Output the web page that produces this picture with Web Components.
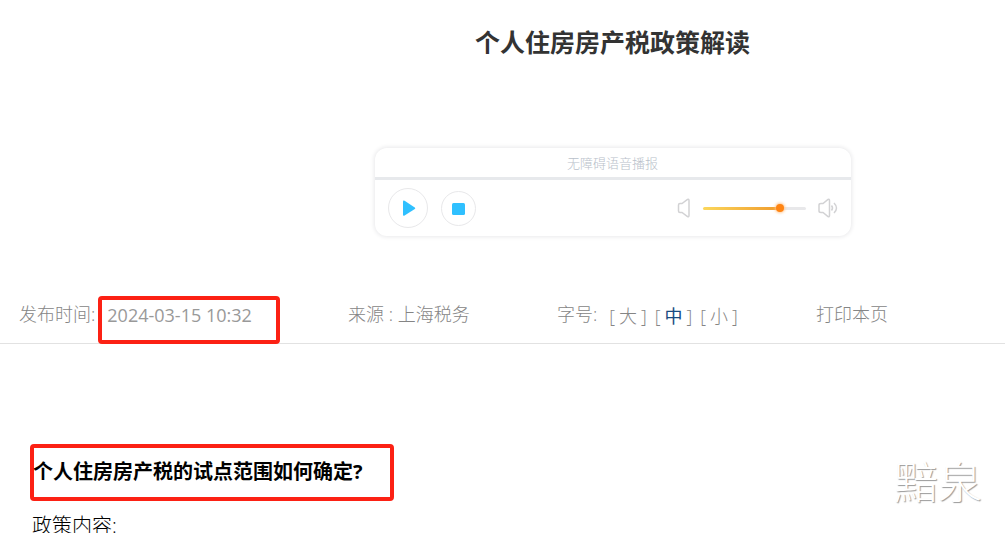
<!DOCTYPE html>
<html lang="zh-CN">
<head>
<meta charset="utf-8">
<title>个人住房房产税政策解读</title>
<style>
html{height:100%;overflow:hidden}
body{margin:0;min-height:100%;background:#fff;font-family:"Open Sans","Noto Sans CJK SC",sans-serif;color:#000}
</style>
</head>
<body>
<policy-page></policy-page>
<script>
const define=(name,html,setup)=>customElements.define(name,class extends HTMLElement{
  constructor(){
    super();
    const t=document.createElement('template');
    t.innerHTML=html;
    this.attachShadow({mode:'open'}).append(t.content.cloneNode(true));
    if(setup)setup(this.shadowRoot);
  }
});

define('mark-box',`
<style>
:host{display:block;box-sizing:border-box;border:4px solid #fc2114;border-radius:4px}
</style><slot></slot>`);

define('voice-player',`
<style>
:host{display:block;box-sizing:border-box;width:476px;max-width:100%;border-radius:12px;background:#fff;box-shadow:0 0 4px 1px #e9e9eb}
.head{height:29px;line-height:29px;text-align:center;font-size:13px;font-weight:300;color:#b9bfca;border-bottom:3px solid #e7e9ec;font-family:"Noto Sans CJK SC",sans-serif}
.bar{display:flex;align-items:center;height:56px;padding:0 13px}
button{display:flex;align-items:center;justify-content:center;box-sizing:border-box;border:1px solid #e8e8ea;border-radius:50%;background:#fff;padding:0}
.play{width:40px;height:40px}
.stop{width:35px;height:35px;margin-left:13px}
svg{display:block;flex:none}
.vol{display:flex;align-items:center;margin-left:auto;gap:12px}
input{appearance:none;-webkit-appearance:none;width:103px;height:14px;margin:0;background:transparent}
input::-webkit-slider-runnable-track{height:3px;border-radius:2px;background:linear-gradient(90deg,#fbd75c,#ef9a2c 76%,#e8e8ea 76%)}
input::-webkit-slider-thumb{-webkit-appearance:none;width:8px;height:8px;margin-top:-3px;border-radius:50%;background:#ff8412;box-shadow:0 0 3px 1px #ffc58d}
</style>
<div class="head">无障碍语音播报</div>
<div class="bar">
<button class="play" aria-label="播放"><svg width="20" height="20" viewBox="0 0 20 20"><path d="M5 3.500Q5 1.800 6.600 2.800L16.800 9.500Q17.800 10.300 16.800 11L6.600 17.500Q5 18.300 5 16.800Z" fill="#2fc0ff"/></svg></button>
<button class="stop" aria-label="停止"><svg width="13" height="15" viewBox="0 0 13 15"><rect y="2" width="13" height="12" rx="1.500" fill="#2fc0ff"/></svg></button>
<div class="vol">
<svg width="14" height="20" viewBox="0 0 14 20" fill="none" stroke="#d2d2d4" stroke-width="1.500"><path d="M3 5.500H5L10.500 1.500Q12 .8 12 2.500V17.500Q12 19.200 10.500 18.500L5 14.500H3Q1.500 14.500 1.500 13V7Q1.500 5.500 3 5.500Z"/></svg>
<input type="range" min="0" max="100" value="77" aria-label="音量">
<svg width="20" height="20" viewBox="0 0 20 20" fill="none" stroke="#d2d2d4" stroke-width="1.500"><path d="M3 5.500H5L10 1.500Q11.500 .8 11.500 2.500V17.500Q11.500 19.200 10 18.500L5 14.500H3Q1 14.500 1 13V7Q1 5.500 3 5.500Z"/><path d="M13.500 7.500Q15.500 10 13.500 12.500M16 5Q21 10 16 15"/></svg>
</div></div>`);

define('font-sizer',`
<style>
:host{display:flex;align-items:flex-start}
.opts{display:flex;gap:8px;margin-left:12px;padding-top:2px}
.opt{display:flex;gap:4px}
a{color:inherit;text-decoration:none}
a.on{color:#174a80;font-weight:400}
</style>
<span>字号:</span><span class="opts"></span>`,root=>{
  for(const s of ['大','中','小']){
    const o=document.createElement('span');o.className='opt';
    o.innerHTML=`<span>[</span><a href="#"${s==='中'?' class="on"':''}>${s}</a><span>]</span>`;
    root.querySelector('.opts').append(o);
  }
});

define('meta-bar',`
<style>
:host{display:grid;grid-template-columns:329fr 209fr 259fr 189fr;align-items:start;box-sizing:border-box;height:48px;padding-left:19px;border-bottom:1px solid #e2e2e2;font-size:18px;line-height:36px;color:#858585;white-space:nowrap;font-weight:300}
.time{display:flex;gap:3px}
mark-box{width:182px;height:48px;padding-left:5px;line-height:30px}
time{font-weight:400;color:#999}
a{color:inherit;text-decoration:none}
</style>
<div class="time"><span>发布时间:</span><mark-box><time datetime="2024-03-15T10:32">2024-03-15 10:32</time></mark-box></div>
<span>来源 : 上海税务</span>
<font-sizer></font-sizer>
<a href="#">打印本页</a>`);

define('water-mark',`
<style>
:host{position:absolute;right:23px;top:450px;font:300 44px/60px "Noto Sans CJK SC",sans-serif;color:#fff;text-shadow:1px 1px 1px #999}
</style><slot></slot>`);

define('policy-page',`
<style>
:host{display:block;position:relative}
header{display:flex;flex-direction:column;align-items:center;padding:24px 0 60px 220px}
h1{margin:0 0 88px;font-size:25px;line-height:36px;font-weight:700;color:#333}
article{padding:100px 30px 0;font-size:20px}
mark-box{width:364px;height:57px}
h2{margin:0 0 0 -1px;font-size:20px;line-height:48px;font-weight:700;white-space:nowrap}
p{margin:10px 2px 0;line-height:30px;font-weight:300}
</style>
<header><h1>个人住房房产税政策解读</h1><voice-player></voice-player></header>
<meta-bar></meta-bar>
<article><mark-box><h2>个人住房房产税的试点范围如何确定?</h2></mark-box><p>政策内容:</p></article>
<water-mark>黯泉</water-mark>`);
</script>
</body>
</html>
